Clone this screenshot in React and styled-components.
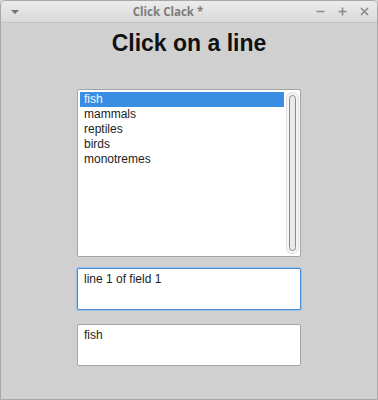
import styled, { createGlobalStyle } from "styled-components";

const Global = createGlobalStyle`
  html, body { margin: 0; padding: 0; background: #d6d6d6; }
  * { box-sizing: border-box; }
`;

const Window = styled.div`
  width: 378px;
  height: 400px;
  display: flex;
  flex-direction: column;
  background: #d0d0d0;
  border: 1px solid #a8a8a8;
  border-radius: 5px 5px 0 0;
  overflow: hidden;
  font-family: "Liberation Sans", Arial, sans-serif;
`;

const TitleBar = styled.div`
  height: 22px;
  flex: none;
  display: grid;
  grid-template-columns: 60px 1fr 102px;
  align-items: center;
  background: linear-gradient(#ececec, #d9d9d9);
  border-bottom: 1px solid #c4c4c4;
`;

const Caption = styled.div`
  text-align: center;
  font-family: "Open Sans", "DejaVu Sans", sans-serif;
  font-weight: 700;
  font-size: 11.5px;
  color: #7c7c7c;
`;

const Controls = styled.div`
  display: flex;
  justify-content: flex-end;
  gap: 13px;
  padding-right: 8px;
  color: #8a8a8a;
`;

const MenuArrow = styled.div`
  margin-left: 10px;
  width: 0;
  height: 0;
  border-left: 4px solid transparent;
  border-right: 4px solid transparent;
  border-top: 4px solid #707070;
`;

const Body = styled.div`
  flex: 1;
  display: flex;
  flex-direction: column;
  align-items: center;
`;

const Heading = styled.h1`
  margin: 7px 0 0;
  font-size: 23px;
  font-weight: 700;
  color: #111;
  line-height: 26px;
`;

const ListBox = styled.div`
  margin-top: 33px;
  width: 224px;
  height: 168px;
  background: #fff;
  border: 1px solid #a4a4a4;
  border-radius: 2px;
  display: flex;
  padding: 2px 1px 2px 2px;
`;

const Items = styled.div`
  flex: 1;
`;

const Item = styled.div`
  height: 15px;
  line-height: 15px;
  font-size: 12px;
  padding-left: 4px;
  color: ${({ $selected }) => ($selected ? "#f2f6fb" : "#222")};
  background: ${({ $selected }) => ($selected ? "#3b8de3" : "transparent")};
`;

const Track = styled.div`
  width: 13px;
  margin-left: 2px;
  border-radius: 6px;
  background: #f4f4f4;
  border: 1px solid #e0e0e0;
  padding: 2px;
  display: flex;
`;

const Thumb = styled.div`
  flex: 1;
  border: 1px solid #8c8c8c;
  border-radius: 4px;
  background: #e9e9e9;
`;

const Field = styled.div`
  width: 224px;
  height: 42px;
  margin-top: ${({ $gap }) => $gap}px;
  background: #fff;
  border: 1px solid ${({ $focused }) => ($focused ? "#4a8ad6" : "#a4a4a4")};
  box-shadow: ${({ $focused }) => ($focused ? "0 0 0 1px #9cc0ea" : "none")};
  border-radius: 2px;
  padding: 3px 6px;
  font-size: 12px;
  line-height: 15px;
  color: #222;
`;

const Glyph = ({ d }) => (
  <svg width="9" height="9" viewBox="0 0 9 9">
    <path d={d} stroke="#8a8a8a" strokeWidth="1.6" fill="none" />
  </svg>
);

const items = ["fish", "mammals", "reptiles", "birds", "monotremes"];

export default function App() {
  return (
    <>
      <Global />
      <Window>
        <TitleBar>
          <MenuArrow />
          <Caption>Click Clack *</Caption>
          <Controls>
            <Glyph d="M0.5 4.5h8" />
            <Glyph d="M0.5 4.5h8M4.5 0.5v8" />
            <Glyph d="M1 1l7 7M8 1l-7 7" />
          </Controls>
        </TitleBar>
        <Body>
          <Heading>Click on a line</Heading>
          <ListBox>
            <Items>
              {items.map((it, i) => (
                <Item key={it} $selected={i === 0}>{it}</Item>
              ))}
            </Items>
            <Track>
              <Thumb />
            </Track>
          </ListBox>
          <Field $gap={11} $focused>line 1 of field 1</Field>
          <Field $gap={14}>fish</Field>
        </Body>
      </Window>
    </>
  );
}
